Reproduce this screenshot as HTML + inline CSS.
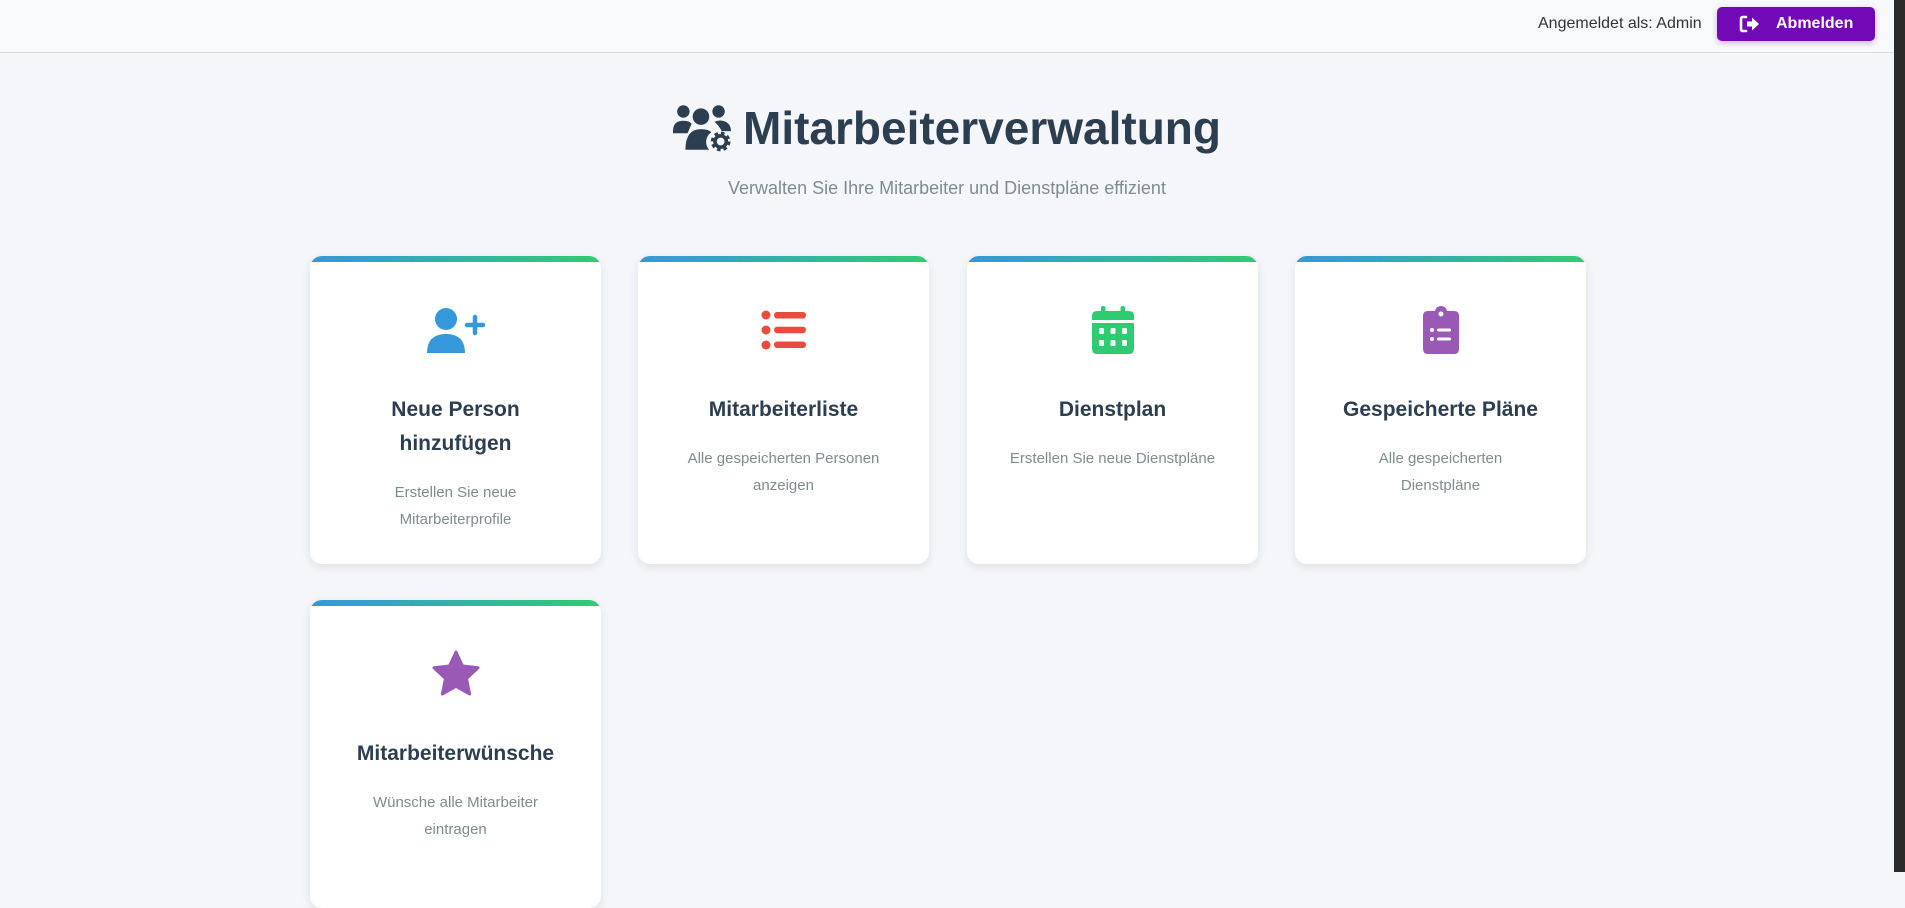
<!DOCTYPE html>
<html><head><meta charset="utf-8"><style>
*{box-sizing:border-box;margin:0;padding:0}
body{width:1905px;height:872px;overflow:hidden;background:#f5f6fa;font-family:"Liberation Sans",sans-serif;position:relative}
.hdr{position:absolute;left:0;top:0;width:1894px;height:53px;background:#f8f9fb;border-bottom:1px solid #dcdcdc}
.who{position:absolute;left:1538px;top:15px;font-size:16px;color:#333}
.btn{position:absolute;left:1717px;top:7px;width:158px;height:34px;background:#7209b7;border-radius:5px;box-shadow:0 2px 6px rgba(114,9,183,.3);color:#fff;font-weight:bold;font-size:16px}
.btn svg{position:absolute;left:22px;top:8px}
.btn span{position:absolute;left:59px;top:8px}
.strip{position:absolute;right:0;top:0;width:11px;height:872px;background:#2b2b2b}
h1{position:absolute;left:0;width:1894px;top:98px;text-align:center;font-size:46px;color:#2c3e50;font-weight:bold;line-height:60px}
h1 svg{vertical-align:-8px;margin-right:12px}
.sub{position:absolute;left:0;width:1894px;top:178px;text-align:center;font-size:18px;color:#7f8c8d}
.card{position:absolute;width:291px;height:308px;background:#fff;border-radius:12px;box-shadow:0 3px 10px rgba(0,0,0,.09);overflow:hidden;text-align:center;padding-top:50px}
.card:before{content:"";position:absolute;left:0;top:0;right:0;height:6px;background:linear-gradient(90deg,#3498db,#2ecc71)}
.ic{height:48px;display:flex;justify-content:center;align-items:center}
.card h3{margin-top:39px;font-size:21px;line-height:34px;color:#2c3e50;padding:0 40px}
.card p{margin-top:18px;font-size:15px;line-height:27px;color:#7f8c8d;padding:0 10px;white-space:nowrap}
</style></head><body>
<div class="hdr">
<div class="who">Angemeldet als: Admin</div>
<div class="btn"><svg width="22" height="18" viewBox="0 0 22 18"><path d="M7 2H4Q2 2 2 4V14Q2 16 4 16H7" fill="none" stroke="#fff" stroke-width="2.6" stroke-linecap="round"/><path d="M8 6.5H13V2.5L20 9L13 15.5V11.5H8Z" fill="#fff"/></svg><span>Abmelden</span></div>
</div>
<div class="strip"></div>
<h1><svg width="58" height="50" viewBox="0 0 56 48"><circle cx="10" cy="9" r="6" fill="#2c3e50"/><circle cx="44" cy="9" r="6" fill="#2c3e50"/><path d="M0 28Q0 18 10 18Q16 18 18 21L14 30H0Z" fill="#2c3e50"/><path d="M40 19Q44 17 48 18Q56 20 56 28L47 28Q44 22 40 19Z" fill="#2c3e50"/><circle cx="27" cy="14" r="8" fill="#2c3e50"/><path d="M12 46Q12 26 27 26Q34 26 37 29Q32 33 32 38Q32 43 35 46Z" fill="#2c3e50"/><circle cx="46" cy="38" r="7" fill="none" stroke="#2c3e50" stroke-width="5" stroke-dasharray="3 2.5"/><circle cx="46" cy="38" r="5.5" fill="none" stroke="#2c3e50" stroke-width="3.5"/></svg>Mitarbeiterverwaltung</h1>
<div class="sub">Verwalten Sie Ihre Mitarbeiter und Dienstpläne effizient</div>

<div class="card" style="left:310px;top:256px">
<div class="ic"><svg width="58" height="46" viewBox="0 0 58 46"><circle cx="19" cy="12" r="11" fill="#3498db"/><path d="M0 46Q0 27 19 27Q38 27 38 46Z" fill="#3498db"/><path d="M48 10V26M40 18H56" stroke="#3498db" stroke-width="4.5" stroke-linecap="round"/></svg></div>
<h3>Neue Person hinzufügen</h3>
<p>Erstellen Sie neue<br>Mitarbeiterprofile</p></div>

<div class="card" style="left:638px;top:256px">
<div class="ic"><svg width="46" height="40" viewBox="0 0 46 40"><g fill="#e74c3c"><circle cx="5" cy="5" r="4.5"/><circle cx="5" cy="20" r="4.5"/><circle cx="5" cy="35" r="4.5"/><rect x="13" y="2" width="32" height="6.5" rx="3.2"/><rect x="13" y="16.7" width="32" height="6.5" rx="3.2"/><rect x="13" y="31.5" width="32" height="6.5" rx="3.2"/></g></svg></div>
<h3>Mitarbeiterliste</h3>
<p>Alle gespeicherten Personen<br>anzeigen</p></div>

<div class="card" style="left:967px;top:256px">
<div class="ic"><svg width="42" height="48" viewBox="0 0 42 48"><g fill="#2ecc71"><rect x="9" y="0" width="4.5" height="9" rx="2"/><rect x="28.5" y="0" width="4.5" height="9" rx="2"/><path d="M0 10Q0 5 5 5H37Q42 5 42 10V14H0Z"/><path d="M0 17H42V43Q42 48 37 48H5Q0 48 0 43Z"/></g><g fill="#fff"><rect x="7" y="22" width="5" height="6" rx="1.5"/><rect x="18.5" y="22" width="5" height="6" rx="1.5"/><rect x="30" y="22" width="5" height="6" rx="1.5"/><rect x="7" y="34" width="5" height="6" rx="1.5"/><rect x="18.5" y="34" width="5" height="6" rx="1.5"/><rect x="30" y="34" width="5" height="6" rx="1.5"/></g></svg></div>
<h3>Dienstplan</h3>
<p>Erstellen Sie neue Dienstpläne</p></div>

<div class="card" style="left:1295px;top:256px">
<div class="ic"><svg width="36" height="48" viewBox="0 0 36 48"><path d="M18 0Q23 0 24 5H31Q36 5 36 10V43Q36 48 31 48H5Q0 48 0 43V10Q0 5 5 5H12Q13 0 18 0Z" fill="#9b59b6"/><circle cx="18" cy="8" r="2.5" fill="#fff"/><circle cx="9" cy="24" r="2" fill="#fff"/><circle cx="9" cy="33" r="2" fill="#fff"/><rect x="14" y="22.5" width="14" height="3" rx="1.5" fill="#fff"/><rect x="14" y="31.5" width="14" height="3" rx="1.5" fill="#fff"/></svg></div>
<h3>Gespeicherte Pläne</h3>
<p>Alle gespeicherten<br>Dienstpläne</p></div>

<div class="card" style="left:310px;top:600px">
<div class="ic"><svg width="50" height="48" viewBox="0 0 50 48"><path d="M25 2L31.5 16L47 17.8L35.5 28.5L38.6 44L25 36.3L11.4 44L14.5 28.5L3 17.8L18.5 16Z" fill="#9b59b6" stroke="#9b59b6" stroke-width="3" stroke-linejoin="round"/></svg></div>
<h3>Mitarbeiterwünsche</h3>
<p>Wünsche alle Mitarbeiter<br>eintragen</p></div>
</body></html>
